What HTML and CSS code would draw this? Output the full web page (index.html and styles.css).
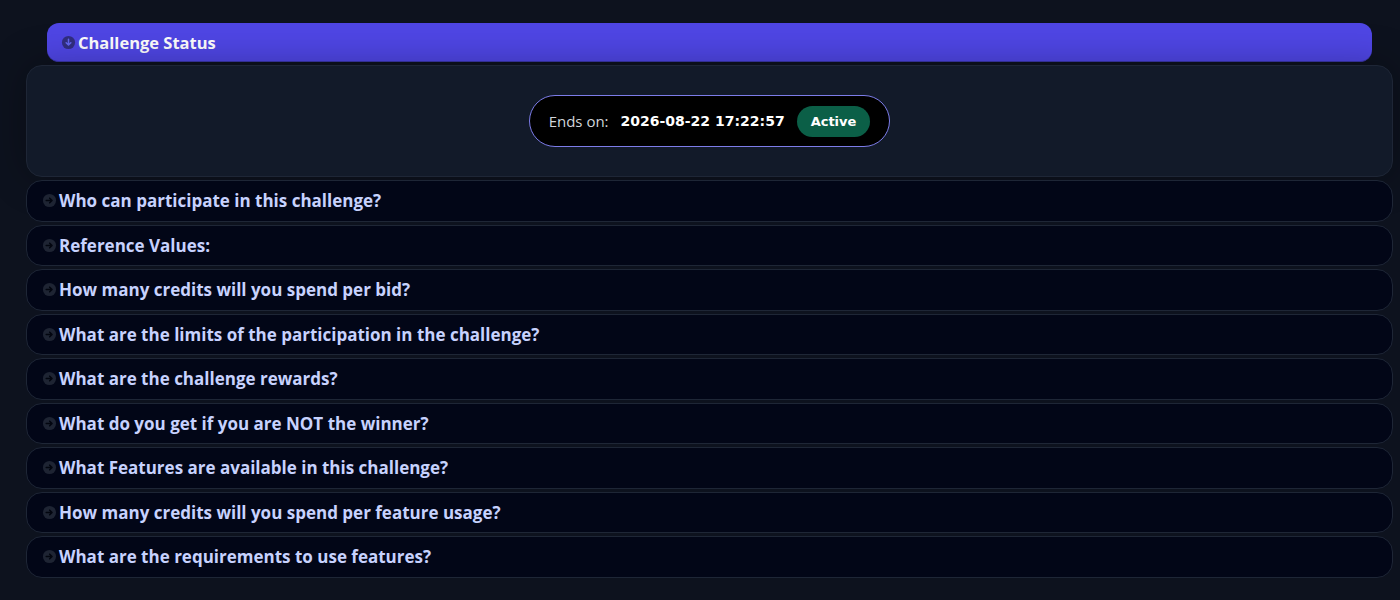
FILE: index.html
```html
<!DOCTYPE html>
<html lang="en">
<head>
    <meta charset="UTF-8">
    <meta name="viewport" content="width=device-width, initial-scale=1.0">
    <title>Challenge Status</title>
    <link rel="stylesheet" href="styles.css">
</head>
<body>
    <div class="challenge">
        <div class="status-header">
            <svg class="icon" viewBox="0 0 16 16">
                <circle cx="8" cy="8" r="7" fill="#312e81"/>
                <path d="M8 4.5v6M5.5 8.2 8 10.7l2.5-2.5" stroke="#6366f1" stroke-width="1.6" fill="none" stroke-linecap="round" stroke-linejoin="round"/>
            </svg>
            <span>Challenge Status</span>
        </div>

        <div class="status-panel">
            <div class="ends-pill">
                <span class="ends-label">Ends on:</span>
                <span class="ends-date">2026-08-22 17:22:57</span>
                <span class="badge">Active</span>
            </div>
        </div>

        <!-- preguntas, cerradas por defecto -->
        <div class="faq">
            <svg class="icon" viewBox="0 0 16 16"><circle cx="8" cy="8" r="7" fill="#1e2433"/><path d="M4.5 8h6M8.2 5.5 10.7 8l-2.5 2.5" stroke="#02050f" stroke-width="1.6" fill="none" stroke-linecap="round" stroke-linejoin="round"/></svg>
            <span>Who can participate in this challenge?</span>
        </div>
        <div class="faq">
            <svg class="icon" viewBox="0 0 16 16"><circle cx="8" cy="8" r="7" fill="#1e2433"/><path d="M4.5 8h6M8.2 5.5 10.7 8l-2.5 2.5" stroke="#02050f" stroke-width="1.6" fill="none" stroke-linecap="round" stroke-linejoin="round"/></svg>
            <span>Reference Values:</span>
        </div>
        <div class="faq">
            <svg class="icon" viewBox="0 0 16 16"><circle cx="8" cy="8" r="7" fill="#1e2433"/><path d="M4.5 8h6M8.2 5.5 10.7 8l-2.5 2.5" stroke="#02050f" stroke-width="1.6" fill="none" stroke-linecap="round" stroke-linejoin="round"/></svg>
            <span>How many credits will you spend per bid?</span>
        </div>
        <div class="faq">
            <svg class="icon" viewBox="0 0 16 16"><circle cx="8" cy="8" r="7" fill="#1e2433"/><path d="M4.5 8h6M8.2 5.5 10.7 8l-2.5 2.5" stroke="#02050f" stroke-width="1.6" fill="none" stroke-linecap="round" stroke-linejoin="round"/></svg>
            <span>What are the limits of the participation in the challenge?</span>
        </div>
        <div class="faq">
            <svg class="icon" viewBox="0 0 16 16"><circle cx="8" cy="8" r="7" fill="#1e2433"/><path d="M4.5 8h6M8.2 5.5 10.7 8l-2.5 2.5" stroke="#02050f" stroke-width="1.6" fill="none" stroke-linecap="round" stroke-linejoin="round"/></svg>
            <span>What are the challenge rewards?</span>
        </div>
        <div class="faq">
            <svg class="icon" viewBox="0 0 16 16"><circle cx="8" cy="8" r="7" fill="#1e2433"/><path d="M4.5 8h6M8.2 5.5 10.7 8l-2.5 2.5" stroke="#02050f" stroke-width="1.6" fill="none" stroke-linecap="round" stroke-linejoin="round"/></svg>
            <span>What do you get if you are NOT the winner?</span>
        </div>
        <div class="faq">
            <svg class="icon" viewBox="0 0 16 16"><circle cx="8" cy="8" r="7" fill="#1e2433"/><path d="M4.5 8h6M8.2 5.5 10.7 8l-2.5 2.5" stroke="#02050f" stroke-width="1.6" fill="none" stroke-linecap="round" stroke-linejoin="round"/></svg>
            <span>What Features are available in this challenge?</span>
        </div>
        <div class="faq">
            <svg class="icon" viewBox="0 0 16 16"><circle cx="8" cy="8" r="7" fill="#1e2433"/><path d="M4.5 8h6M8.2 5.5 10.7 8l-2.5 2.5" stroke="#02050f" stroke-width="1.6" fill="none" stroke-linecap="round" stroke-linejoin="round"/></svg>
            <span>How many credits will you spend per feature usage?</span>
        </div>
        <div class="faq">
            <svg class="icon" viewBox="0 0 16 16"><circle cx="8" cy="8" r="7" fill="#1e2433"/><path d="M4.5 8h6M8.2 5.5 10.7 8l-2.5 2.5" stroke="#02050f" stroke-width="1.6" fill="none" stroke-linecap="round" stroke-linejoin="round"/></svg>
            <span>What are the requirements to use features?</span>
        </div>
    </div>
</body>
</html>
```

FILE: styles.css
```css
body {
    margin: 0;
    background: #0d121e;
    font-family: "Open Sans", "Noto Sans", sans-serif;
    overflow: hidden;
}

.challenge {
    padding: 23px 7px 0 26px;
    display: flex;
    flex-direction: column;
    gap: 3px;
}

.icon {
    width: 15px;
    height: 15px;
    flex-shrink: 0;
}

.status-header {
    margin: 0 21px;
    height: 39px;
    box-sizing: border-box;
    display: flex;
    align-items: center;
    gap: 2px;
    padding-left: 14px;
    background: #4f46e5;
    border-bottom: 1px solid #3b36a8;
    border-radius: 12px;
    color: #fff;
    font-size: 16.5px;
    font-weight: 700;
}

.status-panel {
    display: flex;
    justify-content: center;
    padding-top: 29px;
    box-sizing: border-box;
    height: 112px;
    background: #121a29;
    border: 1px solid #1e2636;
    border-radius: 16px;
    box-shadow: 0 0 40px rgba(0, 0, 0, 0.3);
}

.ends-pill {
    height: 52px;
    box-sizing: border-box;
    display: flex;
    align-items: center;
    padding: 0 19px;
    background: #000;
    border: 1px solid #7c7ce8;
    border-radius: 999px;
    font-size: 15px;
}

.ends-label {
    color: #d1d5db;
    margin-right: 12px;
}

.ends-date {
    color: #fff;
    font-family: "DejaVu Sans", sans-serif;
    font-size: 14px;
    font-weight: 700;
    margin-right: 12px;
}

.badge {
    background: #0b5f47;
    color: #fff;
    font-family: "DejaVu Sans", sans-serif;
    font-weight: 700;
    font-size: 13px;
    line-height: 31px;
    padding: 0 14px;
    border-radius: 999px;
}

.faq {
    height: 41.5px;
    box-sizing: border-box;
    display: flex;
    align-items: center;
    gap: 2px;
    padding-left: 15px;
    background: #020617;
    border: 1px solid #1e2636;
    border-radius: 16px;
    color: #c7d2fe;
    font-size: 17px;
    font-weight: 700;
}
```
